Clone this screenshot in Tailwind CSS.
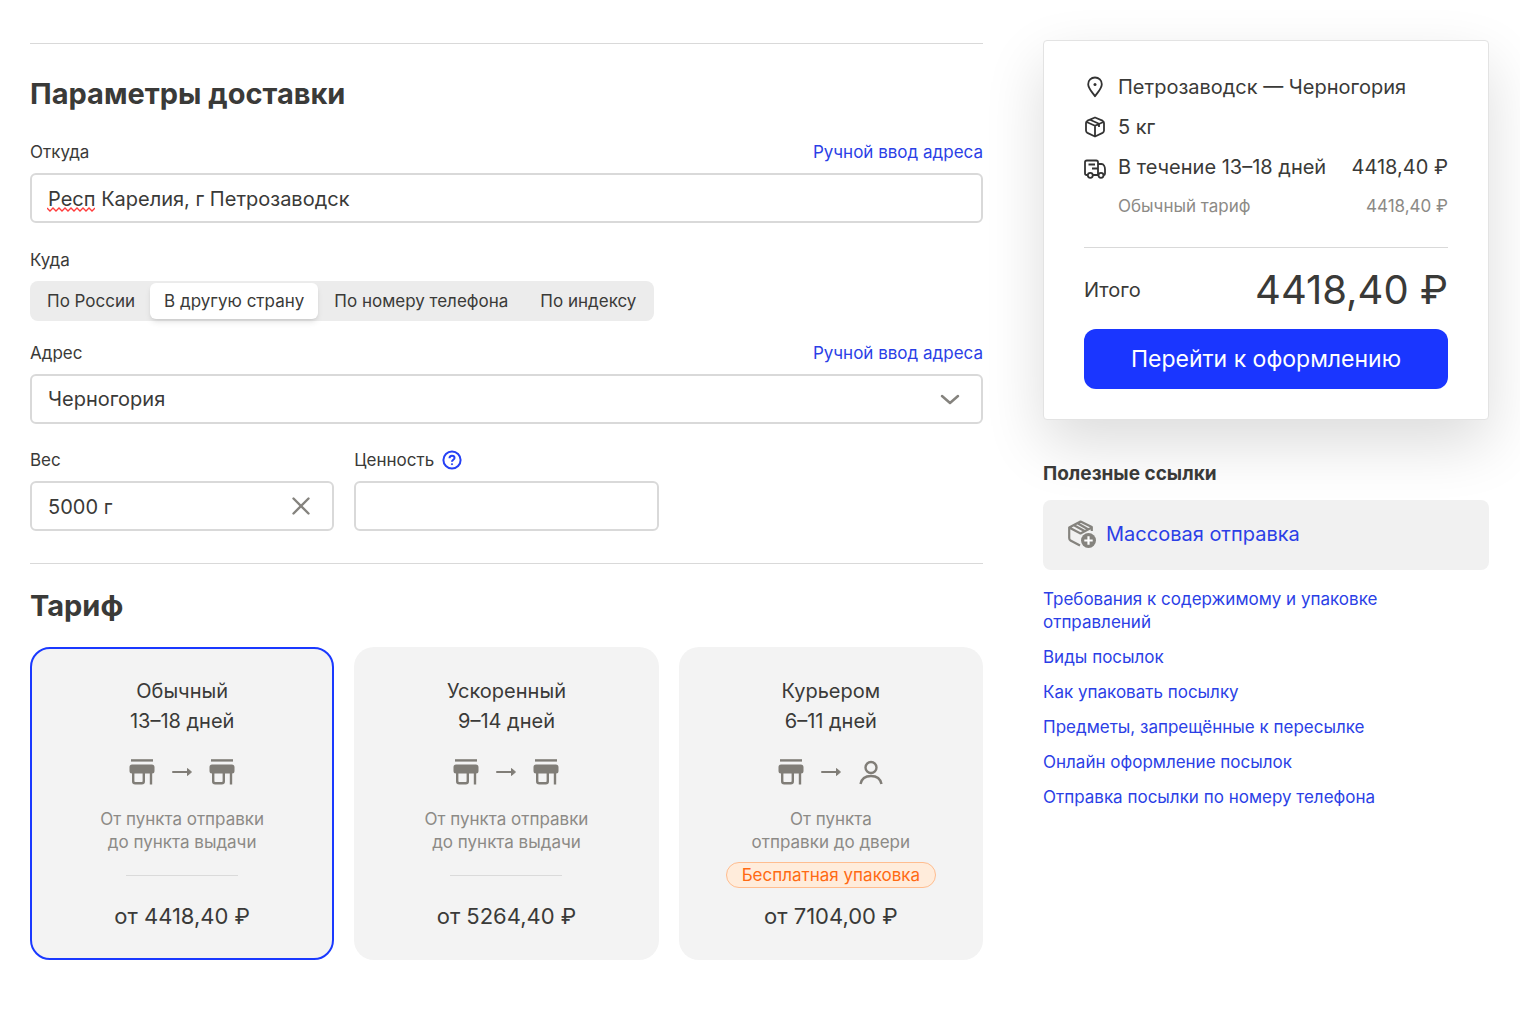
<!DOCTYPE html>
<html lang="ru">
<head>
<meta charset="utf-8">
<meta name="viewport" content="width=device-width, initial-scale=1">
<title>Параметры доставки</title>
<script src="https://cdn.jsdelivr.net/npm/@tailwindcss/browser@4"></script>
</head>
<body class="bg-white font-['Inter','Liberation_Sans',sans-serif] text-[17px] leading-6 text-[#3a3a38]">
<svg class="hidden" aria-hidden="true">
  <symbol id="shop" viewBox="0 0 26 26">
    <path d="M2 1.400h22" stroke="currentColor" stroke-width="2.400" fill="none"/>
    <path d="M3.500 5.500h19A2.500 2.500 0 0 1 25.500 8v4a2.500 2.500 0 0 1-2.500 2.500H3A2.500 2.500 0 0 1 .5 12V8A2.500 2.500 0 0 1 3 5.500z" fill="currentColor"/>
    <path d="M4.200 13v9.300a2 2 0 0 0 2 2h6.600a2 2 0 0 0 2-2V13M22 13v12.500" fill="none" stroke="currentColor" stroke-width="2.400"/>
  </symbol>
  <symbol id="arrow" viewBox="0 0 22 10">
    <path d="M2 5h16" stroke="currentColor" stroke-width="2" stroke-linecap="round"/>
    <path d="M16.500 1.500L20.500 5 16.500 8.500z" fill="currentColor" stroke="currentColor" stroke-width="1" stroke-linejoin="round"/>
  </symbol>
</svg>
<div class="flex items-start gap-[60px] pl-[30px] pr-[31px]">
  <main class="min-w-0 flex-1 pt-[43px] pb-[54px]">
    <hr class="border-[#d9d9d9]">
    <h2 class="mt-[30px] text-[29px] leading-10 font-bold">Параметры доставки</h2>

    <div class="mt-[26px] flex justify-between">
      <label for="from">Откуда</label>
      <a href="#" class="text-[#2b3fe6]">Ручной ввод адреса</a>
    </div>
    <div class="relative mt-[9px]">
      <input id="from" type="text" spellcheck="false" value="Респ Карелия, г Петрозаводск" class="h-[50px] w-full rounded-md border-2 border-[#d9d9d9] px-4 pt-[2px] text-[20px]">
      <svg class="pointer-events-none absolute left-[17px] top-[34px] h-[5px] w-12" viewBox="0 0 48 5" fill="none" stroke="#ff3b3b" stroke-width="1.300"><path d="M0 1l3 3 3-3 3 3 3-3 3 3 3-3 3 3 3-3 3 3 3-3 3 3 3-3 3 3 3-3 3 3 3-3"/></svg>
    </div>

    <div class="mt-[25px]" id="where">Куда</div>
    <div class="mt-[9px] inline-flex h-10 rounded-lg bg-[#ececec] p-[2px] align-top" role="group" aria-labelledby="where">
      <button class="px-[15px]">По России</button>
      <button class="rounded-md bg-white px-[14px] shadow-md" aria-pressed="true">В другую страну</button>
      <button class="px-4">По номеру телефона</button>
      <button class="px-4">По индексу</button>
    </div>

    <div class="mt-5 flex justify-between">
      <label for="country">Адрес</label>
      <a href="#" class="text-[#2b3fe6]">Ручной ввод адреса</a>
    </div>
    <div class="relative mt-[9px]">
      <select id="country" class="h-[50px] w-full appearance-none rounded-md border-2 border-[#d9d9d9] px-4 text-[20px]"><option>Черногория</option></select>
      <svg class="pointer-events-none absolute right-[23px] top-5 h-[11px] w-5" viewBox="0 0 20 11" fill="none" stroke="#85837e" stroke-width="2.500" stroke-linecap="round" stroke-linejoin="round"><path d="M2 2l8 7 8-7"/></svg>
    </div>

    <div class="mt-6 grid grid-cols-3 gap-5">
      <div>
        <label for="weight" class="block">Вес</label>
        <div class="relative mt-[9px]">
          <input id="weight" type="text" value="5000 г" class="h-[50px] w-full rounded-md border-2 border-[#d9d9d9] px-4 pt-[2px] text-[20px]">
          <button aria-label="Очистить" class="absolute right-[23px] top-[15px]"><svg class="h-5 w-5" viewBox="0 0 20 20" fill="none" stroke="#85837e" stroke-width="2.400" stroke-linecap="round"><path d="M2.500 2.500l15 15M17.500 2.500l-15 15"/></svg></button>
        </div>
      </div>
      <div>
        <div class="flex items-center gap-2">
          <label for="value">Ценность</label>
          <button aria-label="Подсказка"><svg class="h-5 w-5" viewBox="0 0 20 20" fill="none" stroke="#2540f5" stroke-width="2"><circle cx="10" cy="10" r="8.600"/><path d="M7.500 8.200c0-1.600 1.100-2.500 2.500-2.500s2.500.9 2.500 2.200c0 1.800-2.500 1.900-2.500 3.800"/><circle cx="10" cy="14.200" r=".6" fill="#2540f5" stroke-width="1"/></svg></button>
        </div>
        <input id="value" type="text" class="mt-[9px] h-[50px] w-full rounded-md border-2 border-[#d9d9d9] px-4 text-[20px]">
      </div>
    </div>

    <hr class="mt-8 border-[#d9d9d9]">
    <h2 class="mt-[22px] text-[29px] leading-10 font-bold">Тариф</h2>

    <div class="mt-[21px] grid grid-cols-3 gap-5">
      <button aria-pressed="true" class="flex h-[313px] flex-col items-center rounded-[20px] border-2 border-[#1a39ff] bg-[#f3f3f3] pt-[27px]">
        <span class="text-[20px] leading-[30px]">Обычный<br>13–18 дней</span>
        <span class="mt-[23px] flex h-[26px] items-center gap-4 text-[#807d77]">
          <svg class="h-[26px] w-[26px]"><use href="#shop"/></svg><svg class="h-[10px] w-[22px]"><use href="#arrow"/></svg><svg class="h-[26px] w-[26px]"><use href="#shop"/></svg>
        </span>
        <span class="mt-[23px] leading-[23px] text-[#8c8a86]">От пункта отправки<br>до пункта выдачи</span>
        <span class="mt-[21px] w-[112px] border-t border-[#dadada]"></span>
        <span class="mt-[25px] text-[22px] leading-[30px]">от 4418,40 ₽</span>
      </button>
      <button class="flex h-[313px] flex-col items-center rounded-[20px] border-2 border-transparent bg-[#f3f3f3] pt-[27px]">
        <span class="text-[20px] leading-[30px]">Ускоренный<br>9–14 дней</span>
        <span class="mt-[23px] flex h-[26px] items-center gap-4 text-[#807d77]">
          <svg class="h-[26px] w-[26px]"><use href="#shop"/></svg><svg class="h-[10px] w-[22px]"><use href="#arrow"/></svg><svg class="h-[26px] w-[26px]"><use href="#shop"/></svg>
        </span>
        <span class="mt-[23px] leading-[23px] text-[#8c8a86]">От пункта отправки<br>до пункта выдачи</span>
        <span class="mt-[21px] w-[112px] border-t border-[#dadada]"></span>
        <span class="mt-[25px] text-[22px] leading-[30px]">от 5264,40 ₽</span>
      </button>
      <button class="flex h-[313px] flex-col items-center rounded-[20px] border-2 border-transparent bg-[#f3f3f3] pt-[27px]">
        <span class="text-[20px] leading-[30px]">Курьером<br>6–11 дней</span>
        <span class="mt-[23px] flex h-[26px] items-center gap-4 text-[#807d77]">
          <svg class="h-[26px] w-[26px]"><use href="#shop"/></svg><svg class="h-[10px] w-[22px]"><use href="#arrow"/></svg><svg class="h-[26px] w-[26px]" viewBox="0 0 26 26" fill="none" stroke="currentColor" stroke-width="2.400"><circle cx="13" cy="8.500" r="5.500"/><path d="M2.500 25c1-5 5-8 10.500-8s9.500 3 10.500 8"/></svg>
        </span>
        <span class="mt-[23px] leading-[23px] text-[#8c8a86]">От пункта<br>отправки до двери</span>
        <span class="mt-2 h-[26px] rounded-full border border-[#ffbd8f] bg-[#ffecdb] px-[15px] leading-6 text-[#ff6a13]">Бесплатная упаковка</span>
        <span class="mt-[13px] text-[22px] leading-[30px]">от 7104,00 ₽</span>
      </button>
    </div>
  </main>

  <aside class="w-[446px] shrink-0 pt-10">
    <section class="rounded border border-[#e3e3e3] bg-white px-10 pb-[30px] pt-[34px] shadow-[0_24px_60px_rgba(0,0,0,0.14)]">
      <div class="flex h-6 items-center gap-3 text-[20px]">
        <svg class="h-[22px] w-[22px]" viewBox="0 0 22 22" fill="none" stroke="#333" stroke-width="1.800" stroke-linejoin="round"><path d="M11 1.500c3.900 0 6.800 3 6.800 6.700 0 4.300-4.100 8-6.800 12-2.700-4-6.800-7.700-6.800-12 0-3.700 2.900-6.700 6.800-6.700z"/><circle cx="11" cy="8.500" r="1.500" fill="#333" stroke="none"/></svg>
        <span>Петрозаводск — Черногория</span>
      </div>
      <div class="mt-4 flex h-6 items-center gap-3 text-[20px]">
        <svg class="h-[22px] w-[22px]" viewBox="0 0 22 22" fill="none" stroke="#333" stroke-width="1.800" stroke-linejoin="round"><path d="M11 1.500l7.500 3.200q1.500.7 1.500 2.300v7.500q0 1.600-1.400 2.400L11 20.500l-7.600-3.600Q2 16.100 2 14.500V7q0-1.600 1.500-2.300zM2.600 6L11 9.800 19.400 6M11 9.800v10.700M6 3.800l9 4V11"/></svg>
        <span>5 кг</span>
      </div>
      <div class="mt-4 flex h-6 items-center gap-3 text-[20px]">
        <svg class="mt-1 h-[22px] w-[22px] shrink-0" viewBox="0 0 22 22" fill="none" stroke="#333" stroke-width="1.800" stroke-linejoin="round"><path d="M3.500 17H2.800Q1 17 1 15.200V4.300Q1 2.500 2.800 2.500h9.400Q14 2.500 14 4.300V17M9 17h5M14 6h3.500c2.200 0 3.500 2.800 3.500 5.500v4q0 1.500-1 1.500M4.500 6.500h6.500M8 10.500H14"/><circle cx="6.300" cy="17.300" r="2.500" fill="#fff"/><circle cx="17" cy="17.300" r="2.500" fill="#fff"/></svg>
        <span class="whitespace-nowrap">В течение 13–18 дней</span>
        <span class="ml-auto whitespace-nowrap">4418,40 ₽</span>
      </div>
      <div class="mt-[15px] flex justify-between pl-[34px] text-[#8c8a86]"><span>Обычный тариф</span><span>4418,40 ₽</span></div>
      <hr class="mt-[29px] border-[#d9d9d9]">
      <div class="mt-[17px] flex items-center justify-between">
        <span class="text-[20px]">Итого</span><span class="text-[40px] leading-[50px]">4418,40 ₽</span>
      </div>
      <button class="mt-[14px] h-[60px] w-full rounded-xl bg-[#1a36ff] text-[23px] text-white">Перейти к оформлению</button>
    </section>
    <section class="relative mt-[42px]">
      <h3 class="text-[19px] font-bold">Полезные ссылки</h3>
      <a href="#" class="mt-[14px] flex h-[70px] items-center gap-[9px] rounded-lg bg-[#f1f1f1] pb-[2px] pl-6 text-[20px] text-[#2b3fe6]">
        <svg class="h-[30px] w-[30px]" viewBox="0 0 30 30" fill="none" stroke="#85837e" stroke-width="2.200" stroke-linejoin="round"><path d="M13 26.500l-9.500-5Q2.200 20.800 2.200 19V8.500L13.500 2.500l11.300 5.500v4M2.200 8.500l11.300 6 11.300-6M6.500 6l11 6M10.500 4.200l10.500 6"/><circle cx="21.500" cy="21.500" r="7.500" fill="#85837e" stroke="none"/><path d="M21.500 17.300v8.400M17.300 21.500h8.400" stroke="#fff"/></svg>
        <span>Массовая отправка</span>
      </a>
      <nav class="mt-[18px] flex max-w-[370px] flex-col items-start gap-3 leading-[23px] text-[#2b3fe6]">
        <a href="#">Требования к содержимому и упаковке отправлений</a>
        <a href="#">Виды посылок</a>
        <a href="#">Как упаковать посылку</a>
        <a href="#">Предметы, запрещённые к пересылке</a>
        <a href="#">Онлайн оформление посылок</a>
        <a href="#">Отправка посылки по номеру телефона</a>
      </nav>
    </section>
  </aside>
</div>
</body>
</html>
